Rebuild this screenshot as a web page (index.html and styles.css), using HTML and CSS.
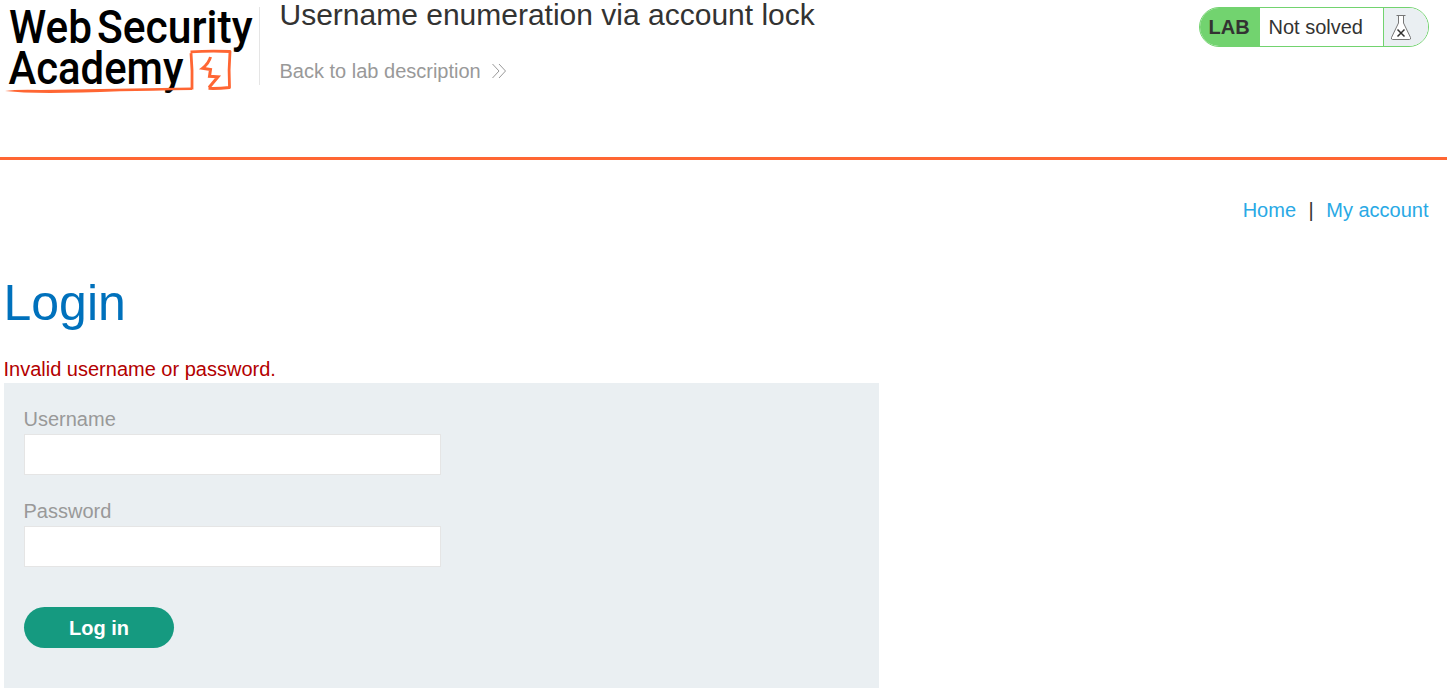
FILE: index.html
```html
<!DOCTYPE html>
<html lang="en">
<head>
<meta charset="utf-8">
<title>Username enumeration via account lock</title>
<link rel="stylesheet" href="styles.css">
</head>
<body>
<header class="lab-header">
  <svg class="logo" width="255" height="98" viewBox="0 0 255 98" role="img" aria-label="Web Security Academy">
    <g class="logo-text">
      <text x="9" y="43" textLength="83" lengthAdjust="spacingAndGlyphs">Web</text>
      <text x="97" y="43" textLength="155.500" lengthAdjust="spacingAndGlyphs">Security</text>
      <text x="8.500" y="84" textLength="175" lengthAdjust="spacingAndGlyphs">Academy</text>
    </g>
    <path class="logo-line" d="M5 91 Q16 89.400 40 90 L192 87.500 V90 Q150 90.700 120 91.300 Q60 93.800 24 92.600 Z"/>
    <path class="logo-box" d="M192 89.500 Q192.600 70 191 53 M190.500 51.800 Q210 50.800 230 51.500 Q228.500 70 229.500 87.500 Q218 88.800 208.500 88.400"/>
    <path class="logo-bolt" d="M210.500 57 Q209 63 202.500 68.300 L210.500 69.500 L209.500 76.300 L218 76.800 L209 87.500"/>
  </svg>
  <div class="heading">
    <h2>Username enumeration via account lock</h2>
    <a class="back" href="#">Back to lab description
      <svg width="16" height="16" viewBox="0 0 16 16"><path d="M1.500 1 L8 8 L1.500 15 M8 1 L14.500 8 L8 15"/></svg>
    </a>
  </div>
  <div class="status">
    <span class="lab">LAB</span>
    <span class="state">Not solved</span>
    <span class="flask">
      <svg width="22" height="27" viewBox="0 0 22 27">
        <path class="glass" d="M6.500 1.500 H15.500 M8.500 1.500 V9 L1.500 23.500 Q1 25.500 2.500 25.500 H19.500 Q21 25.500 20.500 23.500 L13.500 9 V1.500"/>
        <path class="cross" d="M7.500 15.500 L14.500 22.500 M14.500 15.500 L7.500 22.500"/>
      </svg>
    </span>
  </div>
</header>
<main>
  <nav class="links"><a href="#">Home</a><span>|</span><a href="#">My account</a></nav>
  <h1>Login</h1>
  <p class="warning">Invalid username or password.</p>
  <form class="login">
    <label for="user">Username</label>
    <input id="user" type="text">
    <label for="pass">Password</label>
    <input id="pass" type="password">
    <button type="button">Log in</button>
  </form>
</main>
</body>
</html>
```
FILE: styles.css
```css
* { box-sizing: border-box; }
body {
  margin: 0;
  background: #fff;
  color: #333332;
  font: 20px/23px "Liberation Sans", Arial, sans-serif;
  overflow: hidden;
}
a { text-decoration: none; color: #29a9e5; }
.lab-header {
  display: flex;
  align-items: flex-start;
  height: 160px;
  padding-right: 18px;
  border-bottom: 3px solid #ff6633;
}
.logo { display: block; flex: none; overflow: visible; }
.logo-text { font: 500 47px Roboto, sans-serif; fill: #000; }
.logo-line { fill: #ff6633; }
.logo-box { fill: none; stroke: #ff6633; stroke-width: 2.800px; stroke-linejoin: round; }
.logo-bolt { fill: none; stroke: #ff6633; stroke-width: 3px; }
.heading {
  height: 78px;
  margin: 7px 0 0 4px;
  padding-left: 19.500px;
  border-left: 1px solid #e5e5e5;
}
h2 { margin: -9px 0 0; font-size: 30px; font-weight: 400; line-height: 34px; white-space: nowrap; }
.back { display: flex; align-items: center; gap: 10px; margin-top: 28px; color: #999; }
.back svg { margin-top: -2px; fill: none; stroke: #999; stroke-width: 1px; }
.status {
  display: flex;
  width: 230px;
  height: 40px;
  margin: 7px 0 0 auto;
  overflow: hidden;
  border: 1px solid #72d36f;
  border-radius: 20px;
  line-height: 38px;
}
.lab { width: 60px; padding-left: 8.500px; background: #72d36f; font-weight: 700; line-height: 39px; }
.state { flex: 1; padding-left: 8.500px; }
.flask {
  display: flex;
  align-items: center;
  width: 45px;
  padding-left: 6px;
  border-left: 1px solid #72d36f;
  background: #eaeff2;
}
.glass { fill: #fff; stroke: #777; stroke-width: 1px; }
.cross { fill: none; stroke: #333332; stroke-width: 1.500px; }
main { padding: 39px 18.500px 0 4px; }
.links { display: flex; justify-content: flex-end; color: #333332; }
.links span { margin: 0 12.500px; }
h1 { margin: 53px 0 0 -.5px; color: #0071bc; font-size: 50px; font-weight: 400; line-height: 57px; }
.warning { margin: 26px 0 2px -.5px; color: #b30000; }
.login {
  display: flex;
  flex-direction: column;
  align-items: flex-start;
  width: 875px;
  height: 305px;
  padding: 25px 20px;
  background: #eaeff2;
  color: #999;
}
.login label { margin-left: -.5px; }
.login input {
  width: 417px;
  height: 41px;
  margin: 3px 0 25px;
  padding: 0 8px;
  border: 1px solid #e5e5e5;
  background: #fff;
}
.login button {
  width: 150px;
  height: 41px;
  margin-top: 15px;
  padding: 1px 0 0;
  border: 0;
  border-radius: 21px;
  background: #159a80;
  color: #fff;
  font: 700 20px "Liberation Sans", Arial, sans-serif;
}
```
